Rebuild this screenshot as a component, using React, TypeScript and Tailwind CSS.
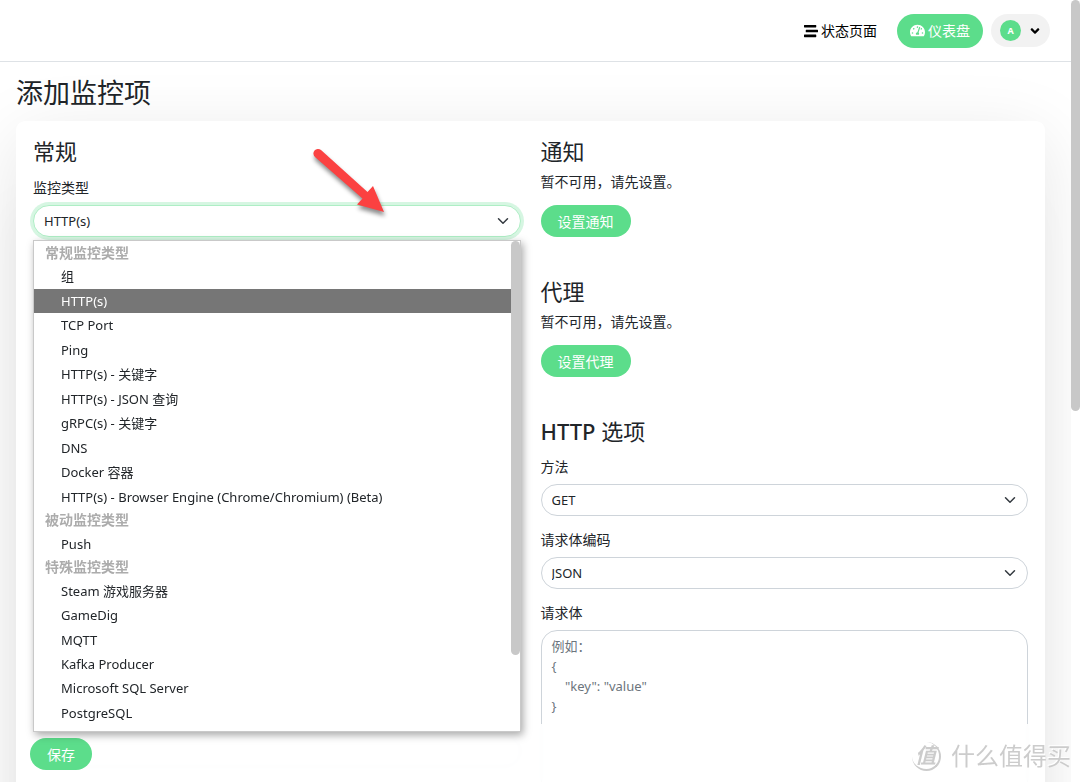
import type { ReactNode } from "react";
import { FaAngleDown, FaStream, FaTachometerAlt } from "react-icons/fa";

const groups = [
  {
    label: "常规监控类型",
    options: [
      "组",
      "HTTP(s)",
      "TCP Port",
      "Ping",
      "HTTP(s) - 关键字",
      "HTTP(s) - JSON 查询",
      "gRPC(s) - 关键字",
      "DNS",
      "Docker 容器",
      "HTTP(s) - Browser Engine (Chrome/Chromium) (Beta)",
    ],
  },
  { label: "被动监控类型", options: ["Push"] },
  {
    label: "特殊监控类型",
    options: ["Steam 游戏服务器", "GameDig", "MQTT", "Kafka Producer", "Microsoft SQL Server", "PostgreSQL"],
  },
];

const selected = "HTTP(s)";

function SelectField({
  id,
  label,
  value,
  focused = false,
  children,
}: {
  id: string;
  label: string;
  value: string;
  focused?: boolean;
  children?: ReactNode;
}) {
  return (
    <div>
      <label htmlFor={id} className="mb-[7px] block leading-5">
        {label}
      </label>
      <div className="relative">
        <select
          id={id}
          defaultValue={value}
          className={
            focused
              ? "block h-8 w-full appearance-none rounded-full border border-[#aeeec5] bg-white px-2.5 pt-0.5 text-[13px] text-[#212529] ring-3 ring-[#5cdd8b]/25 outline-none"
              : "block h-8 w-full appearance-none rounded-full border border-[#ced4da] bg-white px-2.5 pt-0.5 text-[13px] text-[#212529] outline-none"
          }
        >
          <option>{value}</option>
        </select>
        <svg
          viewBox="0 0 16 16"
          className="pointer-events-none absolute top-[10px] right-3 size-3"
          fill="none"
          stroke="#343a40"
          strokeWidth="2"
          strokeLinecap="round"
          strokeLinejoin="round"
          aria-hidden="true"
        >
          <path d="m2 5 6 6 6-6" />
        </svg>
        {children}
      </div>
    </div>
  );
}

function TypeMenu() {
  return (
    <div
      role="listbox"
      aria-label="监控类型"
      className="absolute inset-x-0 top-[35px] z-30 flex h-[492px] border border-[#c9c9c9] bg-white shadow-[2px_3px_8px_rgba(0,0,0,0.35)]"
    >
      <div className="flex flex-1 flex-col justify-between pt-px pb-[6px]">
        {groups.map((group) => (
          <div key={group.label} role="group" aria-label={group.label} className="contents">
            <div className="pl-[11px] leading-[22px] font-bold text-[#acacac]">{group.label}</div>
            {group.options.map((option) => (
              <div
                key={option}
                role="option"
                aria-selected={option === selected}
                className={
                  option === selected
                    ? "bg-[#767676] pl-[27px] text-[13px] leading-6 text-white"
                    : "pl-[27px] text-[13px] leading-6"
                }
              >
                {option}
              </div>
            ))}
          </div>
        ))}
      </div>
      <div className="w-[9px]">
        <div className="h-[414px] rounded-full bg-[#c8c8c8]" />
      </div>
    </div>
  );
}

function SetupSection({ title, action }: { title: string; action: string }) {
  return (
    <section className="mb-10">
      <h2 className="text-[22px] leading-7">{title}</h2>
      <p className="mt-[7px] leading-5">暂不可用，请先设置。</p>
      <button type="button" className="mt-[13px] h-8 rounded-full bg-[#5cdd8b] px-[17px] text-[14px] text-white">
        {action}
      </button>
    </section>
  );
}

function Arrow() {
  return (
    <svg
      viewBox="0 0 90 84"
      className="pointer-events-none absolute top-[7px] left-[274px] z-20 h-[84px] w-[90px]"
      aria-hidden="true"
    >
      <path
        d="M14 6 60.5 48 66 42 77 68 50 60.5 55.5 54.5 8 13A4.6 4.6 0 0 1 14 6Z"
        fill="#fb4141"
        style={{ filter: "drop-shadow(1px 4px 2px rgba(0,0,0,0.45))" }}
      />
    </svg>
  );
}

function Watermark() {
  return (
    <div className="pointer-events-none absolute right-[9px] bottom-[10px] z-50 flex items-center gap-[10px] text-[#cccccc]">
      <span className="flex size-[29px] items-center justify-center rounded-full border-r-2 border-b-2 border-[#cccccc] text-[21px] leading-none font-bold italic">
        值
      </span>
      <span className="text-[24px] leading-8 [text-shadow:-1px_-1px_0_#fff]">什么值得买</span>
    </div>
  );
}

export default function App() {
  return (
    <div className="relative flex h-screen overflow-hidden bg-white font-['Noto_Sans','Noto_Sans_CJK_SC',sans-serif] text-[14px] text-[#212529]">
      <div className="relative min-w-0 flex-1 overflow-hidden">
        <header className="relative z-10 flex h-[62px] items-center justify-end border-b border-[#dee2e6] bg-white pr-[21px]">
          <a href="#status" className="flex items-center gap-[3px] text-black">
            <FaStream className="size-[14px]" />
            状态页面
          </a>
          <a
            href="#dashboard"
            className="ml-5 flex h-[34px] items-center gap-[3px] rounded-full bg-[#5cdd8b] px-[13px] text-white"
          >
            <FaTachometerAlt className="size-[15px]" />
            仪表盘
          </a>
          <button type="button" aria-label="A" className="ml-2 flex h-[33px] items-center gap-[7px] rounded-full bg-[#f2f2f2] pr-2 pl-[9px] text-black">
            <span className="flex size-[21px] items-center justify-center rounded-full bg-[#5cdd8b] text-[9px] font-bold text-white">
              A
            </span>
            <FaAngleDown className="size-[14px]" />
          </button>
        </header>

        <main className="pr-[26px] pl-4">
          <h1 className="pt-[11px] text-[27px] leading-10">添加监控项</h1>
          <form className="relative mt-2 grid h-[900px] grid-cols-2 content-start gap-5 rounded-[9px] bg-white px-[17px] pt-4 shadow-[0_15px_70px_rgba(0,0,0,0.1),-8px_80px_50px_-8px_rgba(0,0,0,0.05)]">
            <div className="relative">
              <h2 className="mb-[13px] text-[22px] leading-7">常规</h2>
              <SelectField id="type" label="监控类型" value={selected} focused>
                <TypeMenu />
              </SelectField>
              <Arrow />
              <input
                aria-label="名称"
                className="mt-[498px] block h-8 w-full rounded-full border border-[#ced4da] bg-white px-2.5 outline-none"
              />
            </div>

            <div>
              <SetupSection title="通知" action="设置通知" />
              <SetupSection title="代理" action="设置代理" />
              <h2 className="mb-3 text-[22px] leading-7 font-medium">
                HTTP <span className="font-normal">选项</span>
              </h2>
              <div className="flex flex-col gap-[14px]">
                <SelectField id="method" label="方法" value="GET" />
                <SelectField id="encoding" label="请求体编码" value="JSON" />
                <div>
                  <label htmlFor="body" className="mb-[7px] block leading-5">
                    请求体
                  </label>
                  <textarea
                    id="body"
                    rows={10}
                    placeholder={'例如：\n{\n    "key": "value"\n}'}
                    className="block w-full resize-none rounded-2xl border border-[#ced4da] bg-white px-2.5 py-[5px] text-[13px] leading-5 outline-none placeholder:text-[#6c757d]"
                  />
                </div>
              </div>
            </div>
          </form>
        </main>

        <div className="absolute right-[26px] bottom-0 left-4 z-20 h-[58px] bg-white/85 px-[14px] pt-[14px] backdrop-blur-[2px]">
          <button type="button" className="block h-8 rounded-full bg-[#5cdd8b] px-[17px] text-[14px] text-white">
            保存
          </button>
        </div>
      </div>

      <div className="w-[9px] bg-white">
        <div className="h-[411px] rounded-full bg-[#c8c8c8]" />
      </div>
      <Watermark />
    </div>
  );
}
